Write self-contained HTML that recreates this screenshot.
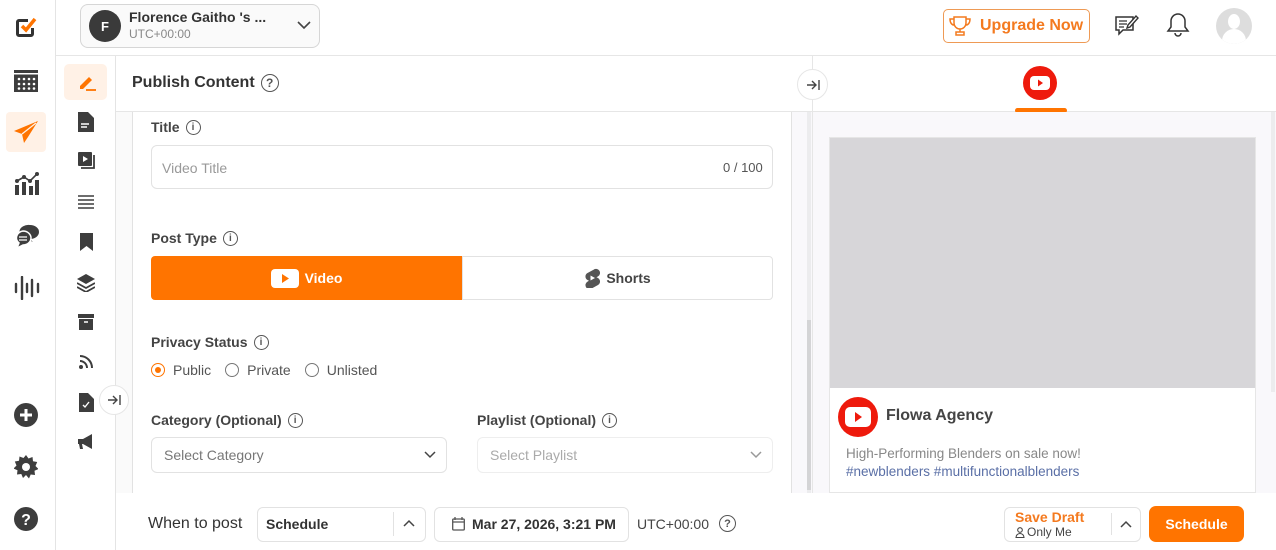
<!DOCTYPE html>
<html><head><meta charset="utf-8"><style>
*{box-sizing:border-box;margin:0;padding:0}
body{width:1276px;height:550px;overflow:hidden;background:#fff;font-family:"Liberation Sans",sans-serif;color:#333;position:relative}
.a{position:absolute}
.lbl{font-size:14px;font-weight:bold;color:#444;display:flex;align-items:center;gap:6px}
.info{width:15px;height:15px;border:1.3px solid #555;border-radius:50%;font-size:10px;display:inline-flex;align-items:center;justify-content:center;font-weight:bold;color:#555}
.inp{border:1px solid #e2e2e2;border-radius:6px;background:#fff}
.ic{fill:#3d3d3d}
.col{z-index:5;border-radius:50%;background:#fff;border:1px solid #e6e6e6;display:flex;align-items:center;justify-content:center}
</style></head><body>
<!-- left rail -->
<div class="a" style="left:55px;top:0;width:1px;height:550px;background:#e4e4e4"></div>
<svg class="a" style="left:13px;top:14px" width="26" height="26" viewBox="0 0 26 26"><path d="M3 5h12v3H6v12h12v-6h3v6a3 3 0 0 1-3 3H6a3 3 0 0 1-3-3V8a3 3 0 0 1 3-3z" fill="#333"/><path d="M9 12l4 4 9-11" stroke="#ff7400" stroke-width="3.5" fill="none"/></svg>
<svg class="a" style="left:14px;top:68px" width="24" height="24" viewBox="0 0 24 24"><rect x="0" y="2" width="24" height="22" fill="#3d3d3d"/><rect x="0" y="5" width="24" height="1.5" fill="#fff"/><g fill="#fff"><circle cx="5" cy="11" r="1.3"/><circle cx="10" cy="11" r="1.3"/><circle cx="15" cy="11" r="1.3"/><circle cx="20" cy="11" r="1.3"/><circle cx="5" cy="16" r="1.3"/><circle cx="10" cy="16" r="1.3"/><circle cx="15" cy="16" r="1.3"/><circle cx="20" cy="16" r="1.3"/><circle cx="5" cy="20.5" r="1.3"/><circle cx="10" cy="20.5" r="1.3"/><circle cx="15" cy="20.5" r="1.3"/><circle cx="20" cy="20.5" r="1.3"/></g></svg>
<div class="a" style="left:6px;top:112px;width:40px;height:40px;background:#fff1e6;border-radius:4px"></div>
<svg class="a" style="left:13px;top:119px" width="26" height="26" viewBox="0 0 26 26"><path d="M25 2L1 12l8 3 2 9 4-6 10-16z" fill="#ff7400"/><path d="M9 15l14-11" stroke="#fff1e6" stroke-width="1.3"/></svg>
<svg class="a" style="left:14px;top:171px" width="26" height="26" viewBox="0 0 26 26"><rect x="1" y="14" width="4" height="10" class="ic"/><rect x="8" y="11" width="4" height="13" class="ic"/><rect x="15" y="15" width="4" height="9" class="ic"/><rect x="21" y="9" width="4" height="15" class="ic"/><path d="M3 10l7-4 6 4 7-7" stroke="#3d3d3d" stroke-width="1.6" fill="none"/><circle cx="3" cy="10" r="2" class="ic"/><circle cx="10" cy="6" r="2" class="ic"/><circle cx="16" cy="10" r="2" class="ic"/><circle cx="23" cy="3" r="2" class="ic"/></svg>
<svg class="a" style="left:14px;top:224px" width="26" height="26" viewBox="0 0 26 26"><path d="M16 1a9 7 0 1 1 0 14l3 3-6-3a9 7 0 0 1 3-14z" class="ic"/><path d="M9 7a8 7 0 1 1 0 14l-6 3 2-5a8 7 0 0 1 4-12z" class="ic" stroke="#fff" stroke-width="1.5"/><path d="M5 13h8M5 16h8" stroke="#fff" stroke-width="1.2"/></svg>
<svg class="a" style="left:14px;top:276px" width="26" height="24" viewBox="0 0 26 24"><g stroke="#3d3d3d" stroke-width="2.4" stroke-linecap="round"><path d="M2 8v8M8 1v22M13 8v8M18 4v16M24 8v8"/></g></svg>
<svg class="a" style="left:14px;top:403px" width="24" height="24" viewBox="0 0 24 24"><circle cx="12" cy="12" r="12" class="ic"/><path d="M12 6v12M6 12h12" stroke="#fff" stroke-width="3"/></svg>
<svg class="a" style="left:14px;top:455px" width="24" height="24" viewBox="0 0 24 24"><path d="M12 0l2.5 3.5 4-1.5.5 4.2 4.2.8-1.7 4 3 3-4 1.7.5 4.3-4.3-.5-1.7 4L12 20l-3 3-1.7-4-4.3.5.5-4.3-4-1.7 3-3-1.7-4 4.2-.8.5-4.200 4 1.5z" class="ic"/><circle cx="12" cy="12" r="4" fill="#fff"/></svg>
<svg class="a" style="left:14px;top:507px" width="24" height="24" viewBox="0 0 24 24"><circle cx="12" cy="12" r="12" class="ic"/><text x="12" y="18" text-anchor="middle" font-size="16" font-weight="bold" fill="#fff" font-family="Liberation Sans">?</text></svg>
<!-- second rail -->
<div class="a" style="left:115px;top:56px;width:1px;height:494px;background:#e4e4e4"></div>
<div class="a" style="left:56px;top:55px;width:1220px;height:1px;background:#e6e6e6"></div>
<div class="a" style="left:64px;top:64px;width:43px;height:36px;background:#fff1e6;border-radius:5px"></div>
<svg class="a" style="left:77px;top:72px" width="20" height="20" viewBox="0 0 20 20"><path d="M3 14l9-9 3 3-9 9H3z" fill="#ff7400"/><path d="M9 18h10" stroke="#ff7400" stroke-width="1.8"/></svg>
<svg class="a" style="left:78px;top:112px" width="16" height="20" viewBox="0 0 16 20"><path d="M0 0h10l6 6v14H0z" class="ic"/><path d="M3 12h8M3 15h6" stroke="#fff" stroke-width="1.5"/></svg>
<svg class="a" style="left:78px;top:152px" width="18" height="18" viewBox="0 0 18 18"><rect x="0" y="0" width="14" height="14" rx="1" class="ic"/><path d="M5 4l5 3-5 3z" fill="#fff"/><path d="M16 3v13H3" stroke="#3d3d3d" stroke-width="1.8" fill="none"/></svg>
<svg class="a" style="left:78px;top:195px" width="16" height="14" viewBox="0 0 16 14"><g stroke="#3d3d3d" stroke-width="1.6"><path d="M0 1h16M0 5h16M0 9h16M0 13h16"/></g></svg>
<svg class="a" style="left:80px;top:233px" width="13" height="18" viewBox="0 0 13 18"><path d="M0 0h13v18l-6.5-5L0 18z" class="ic"/></svg>
<svg class="a" style="left:77px;top:274px" width="18" height="18" viewBox="0 0 18 18"><path d="M9 0l9 5-9 5-9-5z" class="ic"/><path d="M0 9l9 5 9-5M0 13l9 5 9-5" stroke="#3d3d3d" stroke-width="1.8" fill="none"/></svg>
<svg class="a" style="left:78px;top:314px" width="16" height="16" viewBox="0 0 16 16"><rect x="0" y="0" width="16" height="4" class="ic"/><rect x="1" y="5" width="14" height="11" class="ic"/><path d="M6 8h4" stroke="#fff" stroke-width="1.5"/></svg>
<svg class="a" style="left:79px;top:354px" width="15" height="15" viewBox="0 0 15 15"><circle cx="2" cy="13" r="2" class="ic"/><path d="M1 7a7 7 0 0 1 7 7M1 2a12 12 0 0 1 12 12" stroke="#3d3d3d" stroke-width="2" fill="none"/></svg>
<svg class="a" style="left:79px;top:393px" width="15" height="19" viewBox="0 0 15 19"><path d="M0 0h9l6 6v13H0z" class="ic"/><path d="M4 12l2 2 4-5" stroke="#fff" stroke-width="1.4" fill="none"/></svg>
<svg class="a" style="left:78px;top:434px" width="18" height="16" viewBox="0 0 18 16"><path d="M0 5h5l9-5v15l-9-5H4l1 5H2l-1-5H0z" class="ic"/></svg>
<!-- header -->
<div class="a" style="left:80px;top:4px;width:240px;height:44px;border:1px solid #d6d6d6;border-radius:8px;background:#fafafa"></div>
<div class="a" style="left:89px;top:10px;width:32px;height:32px;border-radius:50%;background:#3a3a3a;color:#fff;font-size:13px;font-weight:bold;display:flex;align-items:center;justify-content:center">F</div>
<div class="a" style="left:129px;top:9px;font-size:14px;font-weight:bold;color:#333">Florence Gaitho 's ...</div>
<div class="a" style="left:129px;top:27px;font-size:12px;color:#888">UTC+00:00</div>
<svg class="a" style="left:297px;top:21px" width="14" height="9" viewBox="0 0 14 9"><path d="M1 1l6 6 6-6" stroke="#444" stroke-width="1.6" fill="none"/></svg>
<div class="a" style="left:943px;top:9px;width:147px;height:34px;border:1px solid #ee9a55;border-radius:5px;color:#f47a1f;font-weight:bold;font-size:16px;display:flex;align-items:center;padding-left:36px">Upgrade Now</div>
<svg class="a" style="left:949px;top:16px" width="22" height="20" viewBox="0 0 22 20"><path d="M5 1h12v6a6 6 0 0 1-12 0zM5 3H1c0 4 2 6 4 6M17 3h4c0 4-2 6-4 6M11 13v3M7 19h8v-3H7z" stroke="#f47a1f" stroke-width="1.5" fill="none"/></svg>
<svg class="a" style="left:1114px;top:13px" width="26" height="24" viewBox="0 0 26 24"><path d="M2 4h17v13H9l-4 4v-4H2z" stroke="#333" stroke-width="1.5" fill="none"/><path d="M5 8h8M5 11h8M5 14h5" stroke="#333" stroke-width="1.3"/><path d="M14 12l8-9 2 2-8 9-3 1z" stroke="#333" stroke-width="1.4" fill="#fff"/></svg>
<svg class="a" style="left:1166px;top:12px" width="24" height="26" viewBox="0 0 24 26"><path d="M12 2a7 7 0 0 1 7 7v6l3 4H2l3-4V9a7 7 0 0 1 7-7z" stroke="#333" stroke-width="1.5" fill="none"/><path d="M9 21a3 3 0 0 0 6 0" stroke="#333" stroke-width="1.5" fill="none"/></svg>
<div class="a" style="left:1216px;top:8px;width:36px;height:36px;border-radius:50%;background:#ddd;overflow:hidden"><div style="position:absolute;left:12px;top:6px;width:12px;height:15px;border-radius:50%;background:#fff"></div><div style="position:absolute;left:6px;top:21px;width:24px;height:18px;border-radius:12px 12px 0 0;background:#fff"></div></div>
<!-- publish header -->
<div class="a" style="left:116px;top:111px;width:1160px;height:1px;background:#e6e6e6"></div>
<div class="a lbl" style="left:132px;top:74px;font-size:16px;color:#333">Publish Content <span class="info" style="width:18px;height:18px;font-size:12px">?</span></div>
<div class="a" style="left:812px;top:56px;width:1px;height:437px;background:#e6e6e6"></div>
<!-- form area -->
<div class="a" style="left:116px;top:112px;width:16px;height:381px;background:#fafafa"></div>
<div class="a" style="left:132px;top:112px;width:1px;height:381px;background:#e2e2e2"></div>
<div class="a" style="left:791px;top:112px;width:1px;height:381px;background:#e2e2e2"></div>
<div class="a" style="left:792px;top:112px;width:20px;height:381px;background:#f9f8fb"></div>
<div class="a" style="left:807px;top:112px;width:4px;height:381px;background:#ececee"></div>
<div class="a" style="left:807px;top:320px;width:4px;height:170px;background:#d4d4d6"></div>
<div class="a lbl" style="left:151px;top:119px">Title <span class="info">i</span></div>
<div class="a inp" style="left:151px;top:145px;width:622px;height:44px"></div>
<div class="a" style="left:162px;top:160px;font-size:14px;color:#999">Video Title</div>
<div class="a" style="left:723px;top:160px;font-size:13px;color:#555">0 / 100</div>
<div class="a lbl" style="left:151px;top:230px">Post Type <span class="info">i</span></div>
<div class="a" style="left:151px;top:256px;width:311px;height:44px;background:#ff7400;border-radius:4px 0 0 4px;color:#fff;font-size:14px;font-weight:bold;display:flex;align-items:center;justify-content:center;gap:6px"><svg width="28" height="19" viewBox="0 0 28 19"><rect width="28" height="19" rx="4" fill="#fff"/><path d="M11 5l7 4.5-7 4.5z" fill="#ff7400"/></svg>Video</div>
<div class="a" style="left:462px;top:256px;width:311px;height:44px;border:1px solid #e2e2e2;border-radius:0 4px 4px 0;color:#444;font-size:14px;font-weight:bold;display:flex;align-items:center;justify-content:center;gap:6px"><svg width="16" height="20" viewBox="0 0 16 20"><path d="M10 1.5L3.5 5a4 4 0 0 0 0 7l1.5.8-1.5.8a4 4 0 0 0 4 7l6.5-3.6a4 4 0 0 0 0-7l-1.5-.8 1.5-.8a4 4 0 0 0-4-7z" fill="#555"/><path d="M6.5 7.5l4.5 2.5-4.5 2.5z" fill="#fff"/></svg>Shorts</div>
<div class="a lbl" style="left:151px;top:334px">Privacy Status <span class="info">i</span></div>
<div class="a" style="left:151px;top:362px;display:flex;align-items:center;font-size:14px;color:#555;gap:8px">
<span style="width:14px;height:14px;border:1.3px solid #ff7400;border-radius:50%;display:inline-flex;align-items:center;justify-content:center"><span style="width:6px;height:6px;border-radius:50%;background:#ff7400"></span></span>Public
<span style="width:14px;height:14px;border:1.3px solid #777;border-radius:50%;margin-left:6px"></span>Private
<span style="width:14px;height:14px;border:1.3px solid #777;border-radius:50%;margin-left:6px"></span>Unlisted</div>
<div class="a lbl" style="left:151px;top:412px">Category (Optional) <span class="info">i</span></div>
<div class="a lbl" style="left:477px;top:412px">Playlist (Optional) <span class="info">i</span></div>
<div class="a inp" style="left:151px;top:437px;width:296px;height:36px"></div>
<div class="a" style="left:164px;top:447px;font-size:14px;color:#777">Select Category</div>
<svg class="a" style="left:424px;top:451px" width="12" height="8" viewBox="0 0 12 8"><path d="M1 1l5 5 5-5" stroke="#444" stroke-width="1.5" fill="none"/></svg>
<div class="a inp" style="left:477px;top:437px;width:296px;height:36px;border-color:#eee"></div>
<div class="a" style="left:490px;top:447px;font-size:14px;color:#aaa">Select Playlist</div>
<svg class="a" style="left:750px;top:451px" width="12" height="8" viewBox="0 0 12 8"><path d="M1 1l5 5 5-5" stroke="#999" stroke-width="1.5" fill="none"/></svg>
<!-- right panel -->
<svg class="a" style="left:1023px;top:66px" width="34" height="34" viewBox="0 0 34 34"><circle cx="17" cy="17" r="17" fill="#ee1a0c"/><rect x="7" y="10" width="20" height="14" rx="4" fill="#fff"/><path d="M15 13.5l5 3.5-5 3.5z" fill="#ee1a0c"/></svg>
<div class="a" style="left:1015px;top:108px;width:52px;height:5px;border-radius:3px;background:#ff7400"></div>
<div class="a" style="left:813px;top:112px;width:463px;height:381px;background:#f9f8fb"></div>
<div class="a" style="left:1271px;top:112px;width:4px;height:280px;background:#ececee"></div>
<div class="a" style="left:829px;top:137px;width:427px;height:356px;background:#fff;border:1px solid #e6e6e6"></div>
<div class="a" style="left:830px;top:138px;width:425px;height:250px;background:#d7d6d9"></div>
<svg class="a" style="left:838px;top:397px" width="40" height="40" viewBox="0 0 40 40"><circle cx="20" cy="20" r="20" fill="#ee1a0c"/><rect x="7" y="10" width="26" height="20" rx="5" fill="#fff"/><path d="M17 15l7 5-7 5z" fill="#ee1a0c"/></svg>
<div class="a" style="left:886px;top:407px;font-size:16px;font-weight:bold;color:#444">Flowa Agency</div>
<div class="a" style="left:846px;top:445px;font-size:13.5px;color:#888;line-height:18px">High-Performing Blenders on sale now!<br><span style="color:#5a6fa6">#newblenders #multifunctionalblenders</span></div>
<!-- collapse buttons -->
<div class="a col" style="left:99px;top:385px;width:30px;height:30px"><svg width="14" height="10" viewBox="0 0 14 10"><path d="M1 5h9M6 1l4 4-4 4M13 0v10" stroke="#444" stroke-width="1.4" fill="none"/></svg></div>
<div class="a col" style="left:797px;top:69px;width:31px;height:31px"><svg width="14" height="10" viewBox="0 0 14 10"><path d="M1 5h9M6 1l4 4-4 4M13 0v10" stroke="#444" stroke-width="1.4" fill="none"/></svg></div>
<!-- bottom bar -->
<div class="a" style="left:116px;top:493px;width:1160px;height:57px;background:#fff"></div>
<div class="a" style="left:148px;top:515px;font-size:16px;color:#333">When to post</div>
<div class="a inp" style="left:257px;top:507px;width:169px;height:35px"></div>
<div class="a" style="left:266px;top:516px;font-size:14px;font-weight:bold;color:#333">Schedule</div>
<div class="a" style="left:393px;top:512px;width:1px;height:24px;background:#e2e2e2"></div>
<svg class="a" style="left:403px;top:519px" width="12" height="8" viewBox="0 0 12 8"><path d="M1 7l5-5 5 5" stroke="#444" stroke-width="1.5" fill="none"/></svg>
<div class="a inp" style="left:434px;top:507px;width:195px;height:35px"></div>
<svg class="a" style="left:452px;top:517px" width="13" height="14" viewBox="0 0 13 14"><rect x="0.7" y="2" width="11.6" height="11" rx="1" stroke="#555" stroke-width="1.3" fill="none"/><path d="M3 0v3M10 0v3M1 5h11" stroke="#555" stroke-width="1.3"/></svg>
<div class="a" style="left:472px;top:516px;font-size:14px;font-weight:bold;color:#333">Mar 27, 2026, 3:21 PM</div>
<div class="a" style="left:637px;top:516px;font-size:14px;color:#444">UTC+00:00</div>
<span class="a info" style="left:719px;top:515px;width:17px;height:17px;font-size:11px">?</span>
<div class="a inp" style="left:1004px;top:507px;width:137px;height:35px"></div>
<div class="a" style="left:1015px;top:509px;font-size:14px;font-weight:bold;color:#f47a1f">Save Draft</div>
<svg class="a" style="left:1015px;top:527px" width="10" height="11" viewBox="0 0 10 11"><circle cx="5" cy="3" r="2.3" stroke="#444" stroke-width="1.1" fill="none"/><path d="M1 10.5a4 4 0 0 1 8 0z" stroke="#444" stroke-width="1.1" fill="none"/></svg>
<div class="a" style="left:1027px;top:525px;font-size:12px;color:#444">Only Me</div>
<div class="a" style="left:1111px;top:513px;width:1px;height:22px;background:#e2e2e2"></div>
<svg class="a" style="left:1120px;top:520px" width="12" height="8" viewBox="0 0 12 8"><path d="M1 7l5-5 5 5" stroke="#444" stroke-width="1.5" fill="none"/></svg>
<div class="a" style="left:1149px;top:506px;width:95px;height:36px;background:#ff7400;border-radius:7px;color:#fff;font-size:14px;font-weight:bold;display:flex;align-items:center;justify-content:center">Schedule</div>
</body></html>
